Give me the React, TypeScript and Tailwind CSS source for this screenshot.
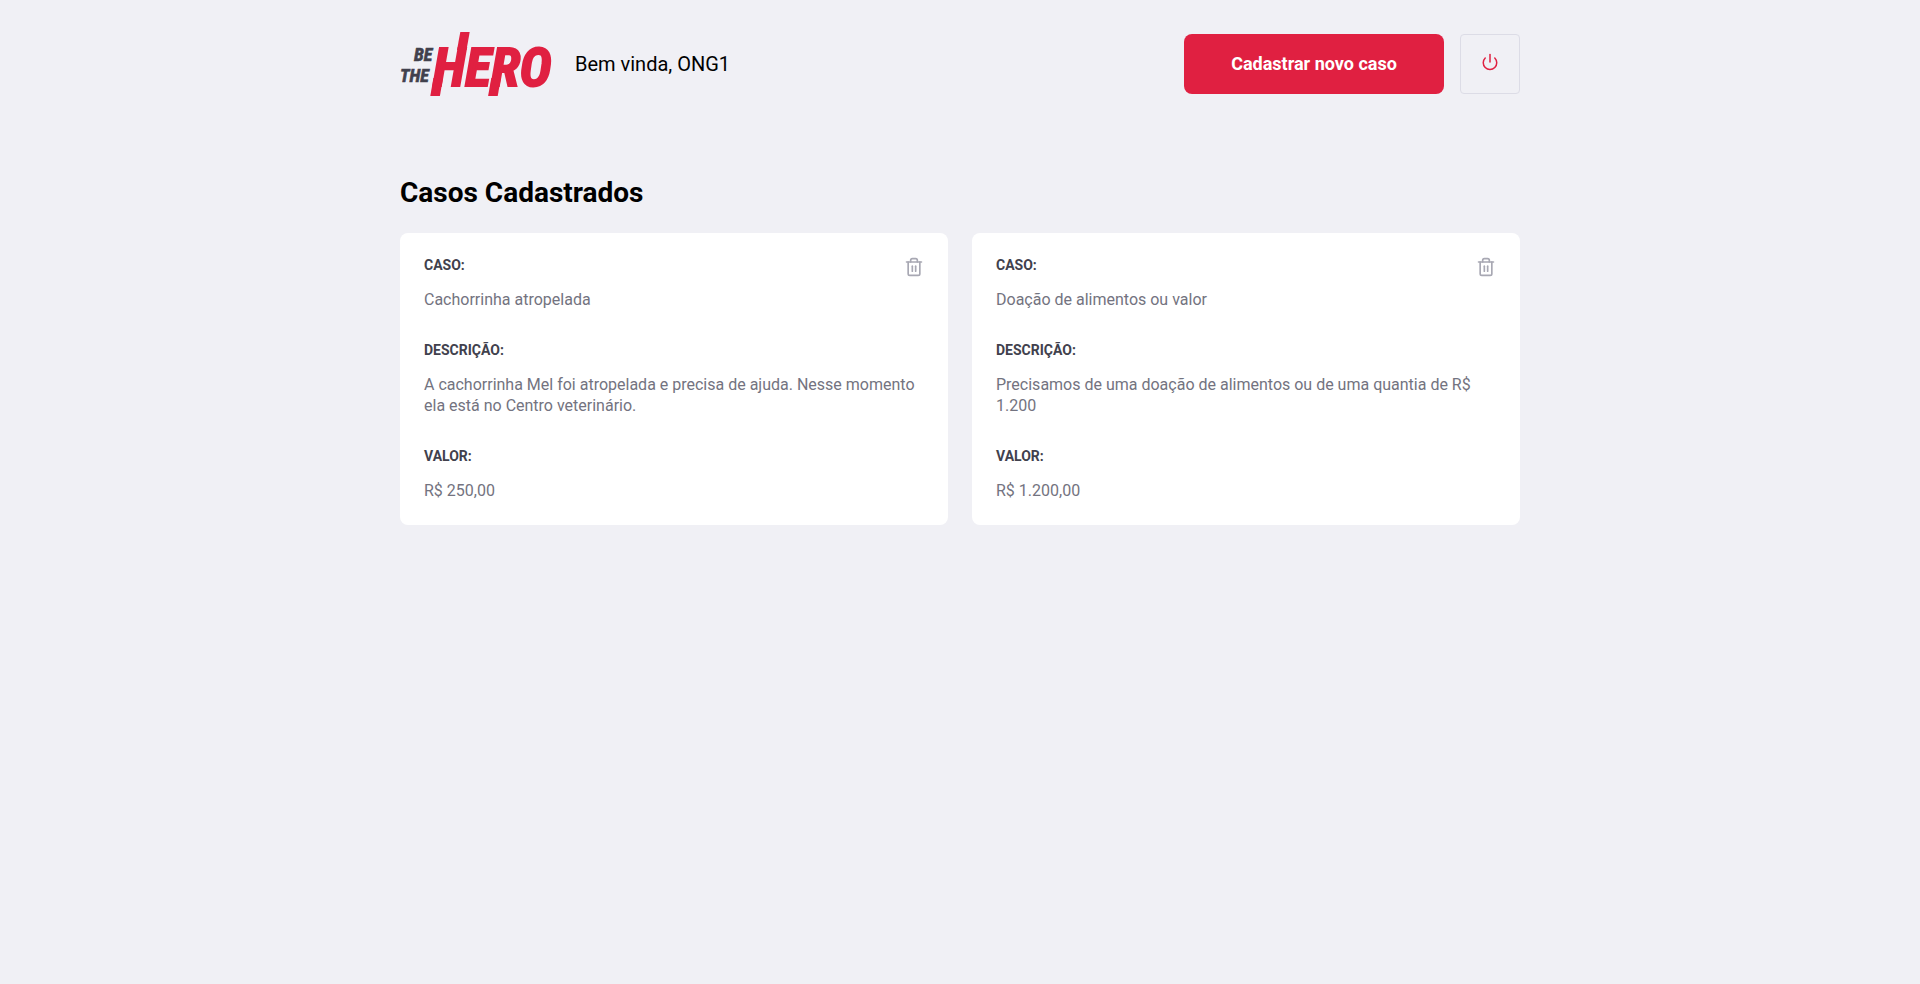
import React from "react";
import { FiPower, FiTrash2 } from "react-icons/fi";

type Incident = {
  id: number;
  title: string;
  description: string;
  value: string;
};

const incidents: Incident[] = [
  {
    id: 1,
    title: "Cachorrinha atropelada",
    description:
      "A cachorrinha Mel foi atropelada e precisa de ajuda. Nesse momento ela está no Centro veterinário.",
    value: "R$ 250,00",
  },
  {
    id: 2,
    title: "Doação de alimentos ou valor",
    description:
      "Precisamos de uma doação de alimentos ou de uma quantia de R$ 1.200",
    value: "R$ 1.200,00",
  },
];

function Logo() {
  return (
    <svg
      viewBox="0 0 151 64"
      className="h-16 w-[151px] shrink-0 overflow-visible font-['Liberation_Sans_Narrow','Roboto_Condensed',sans-serif] font-bold italic"
      role="img"
      aria-label="Be The Hero"
    >
      <g fill="#41414d" stroke="#41414d" strokeWidth="0.6">
        <text x="14" y="29" fontSize="18">BE</text>
        <text x="0" y="50" fontSize="18">THE</text>
      </g>
      <g fill="#e02041">
        <text x="33" y="54" fontSize="54" stroke="#e02041" strokeWidth="2">
          HERO
        </text>
        {/* Slanted bars that run past the top and the foot of the word */}
        <path d="M57 18 60.3 0H69.7L66.5 18Z" />
        <path d="M33.4 46H43L39.9 64H30.3Z" />
        <path d="M91.3 46H100.9L97.7 64H88.1Z" />
      </g>
    </svg>
  );
}

function Field({ label, children }: { label: string; children: React.ReactNode }) {
  return (
    <div>
      <dt className="mb-4 text-sm leading-4 font-bold text-[#41414d]">{label}</dt>
      <dd className="text-base leading-[21px] text-[#737380]">{children}</dd>
    </div>
  );
}

function IncidentCard({ incident }: { incident: Incident }) {
  return (
    <li className="relative rounded-lg bg-white p-6">
      <dl className="flex flex-col gap-8">
        <Field label="CASO:">{incident.title}</Field>
        <Field label="DESCRIÇÃO:">{incident.description}</Field>
        <Field label="VALOR:">{incident.value}</Field>
      </dl>
      <button
        type="button"
        aria-label={`Excluir ${incident.title}`}
        className="absolute top-6 right-6 cursor-pointer hover:opacity-80"
      >
        <FiTrash2 size={20} color="#a8a8b3" />
      </button>
    </li>
  );
}

export default function App() {
  return (
    <div className="min-h-screen bg-[#f0f0f5] font-['Roboto',sans-serif] text-black antialiased">
      <main className="mx-auto max-w-[1180px] px-[30px] py-8">
        <header className="flex items-center">
          <Logo />
          <span className="ml-6 text-xl">Bem vinda, ONG1</span>
          <a
            href="#novo"
            className="ml-auto w-[260px] rounded-lg bg-[#e02041] text-center text-lg leading-[60px] font-bold text-white"
          >
            Cadastrar novo caso
          </a>
          <button
            type="button"
            aria-label="Sair"
            className="ml-4 flex size-[60px] cursor-pointer items-center justify-center rounded border border-[#dcdce6] pb-1"
          >
            <FiPower size={18} color="#e02041" />
          </button>
        </header>

        <h1 className="mt-20 mb-6 text-[28px] leading-[33px] font-bold">Casos Cadastrados</h1>

        <ul className="grid grid-cols-1 gap-6 md:grid-cols-2">
          {incidents.map((incident) => (
            <IncidentCard key={incident.id} incident={incident} />
          ))}
        </ul>
      </main>
    </div>
  );
}
